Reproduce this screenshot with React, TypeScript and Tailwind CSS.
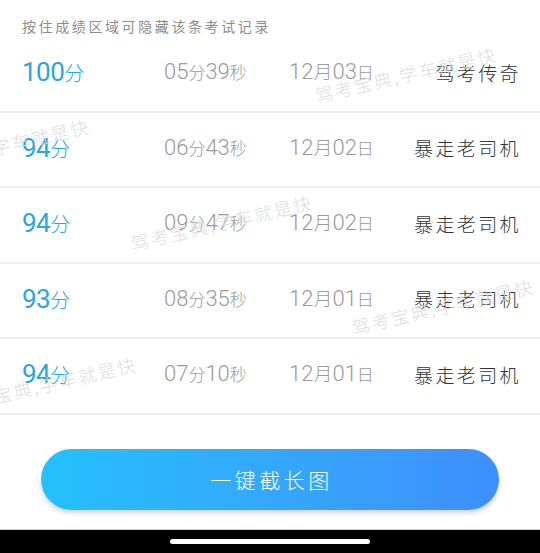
import React from "react";

const rows = [
  { score: "100", min: "05", sec: "39", day: "03", name: "驾考传奇" },
  { score: "94", min: "06", sec: "43", day: "02", name: "暴走老司机" },
  { score: "94", min: "09", sec: "47", day: "02", name: "暴走老司机" },
  { score: "93", min: "08", sec: "35", day: "01", name: "暴走老司机" },
  { score: "94", min: "07", sec: "10", day: "01", name: "暴走老司机" },
];

const cjk = "font-['Noto_Sans_CJK_SC',sans-serif]";
const num = "font-['Roboto','Noto_Sans_CJK_SC',sans-serif]";

function Watermark({ left, top }: { left: number; top: number }) {
  return (
    <div
      className={`pointer-events-none absolute whitespace-nowrap origin-left -rotate-[13deg] text-[18px] leading-[20px] tracking-[2px] text-[#dddddd] font-light ${cjk}`}
      style={{ left, top }}
    >
      驾考宝典,学车就是快
    </div>
  );
}

export default function App() {
  return (
    <div className="relative w-[540px] h-[553px] overflow-hidden bg-white flex flex-col">
      <div className={`h-[37px] pt-[16px] pl-[22px] text-[14px] leading-[20px] tracking-[2.6px] text-[#8c8c8c] ${cjk}`}>
        按住成绩区域可隐藏该条考试记录
      </div>
      <div className="flex flex-col">
        {rows.map((r, i) => (
          <div
            key={i}
            className="h-[75.5px] border-b-2 border-[#f1f1f1] flex items-center pb-[3px] pl-[22px] pr-[19px]"
          >
            <div className="w-[142px] flex items-baseline text-[#2aa6d7]">
              <span className={`${num} text-[26px] leading-none tracking-[-0.5px]`}>{r.score}</span>
              <span className={`${cjk} font-light text-[20px] leading-none`}>分</span>
            </div>
            <div className="w-[125px] flex items-baseline text-[#9a9a9a]">
              <span className={`${num} font-light text-[22px] leading-none`}>{r.min}</span>
              <span className={`${cjk} font-light text-[17px] leading-none`}>分</span>
              <span className={`${num} font-light text-[22px] leading-none`}>{r.sec}</span>
              <span className={`${cjk} font-light text-[17px] leading-none`}>秒</span>
            </div>
            <div className="flex items-baseline text-[#9a9a9a]">
              <span className={`${num} font-light text-[22px] leading-none`}>12</span>
              <span className={`${cjk} font-light text-[19px] leading-none`}>月</span>
              <span className={`${num} font-light text-[22px] leading-none`}>{r.day}</span>
              <span className={`${cjk} font-light text-[17px] leading-none`}>日</span>
            </div>
            <div className={`ml-auto ${cjk} font-light text-[19px] leading-none tracking-[2.4px] text-[#333333]`}>
              {r.name}
            </div>
          </div>
        ))}
      </div>
      <div className="flex-1 flex flex-col justify-end">
        <div className="px-[41px] pb-[19px]">
          <div className="h-[61px] rounded-full bg-gradient-to-r from-[#24c0fc] to-[#3e8ffb] shadow-[0_3px_5px_rgba(0,0,0,0.18)] flex items-center justify-center">
            <span className={`${cjk} font-light text-white text-[21px] leading-none tracking-[3.5px] pl-[3px]`}>
              一键截长图
            </span>
          </div>
        </div>
        <div className="h-[1px] bg-[#d0d0d0]" />
        <div className="h-[23px] bg-black flex items-start justify-center pt-[9px]">
          <div className="w-[200px] h-[5px] rounded-full bg-white" />
        </div>
      </div>

      <Watermark left={315} top={85} />
      <Watermark left={-92} top={157} />
      <Watermark left={131} top={233} />
      <Watermark left={352} top={317} />
      <Watermark left={-45} top={395} />
    </div>
  );
}
